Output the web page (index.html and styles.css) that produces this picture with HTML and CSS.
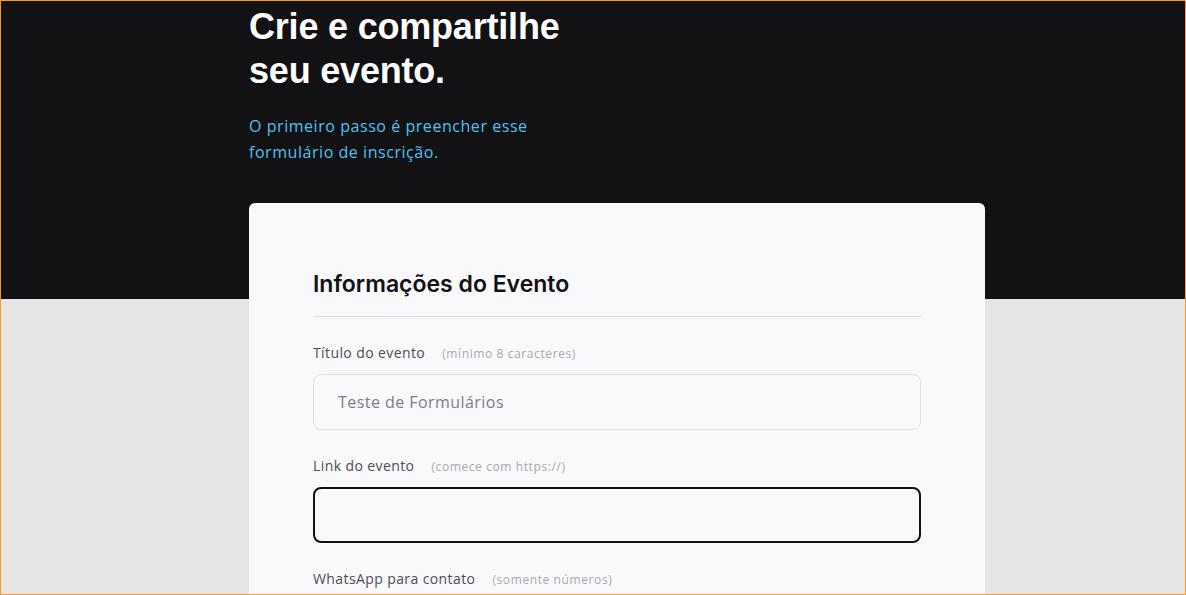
FILE: index.html
```html
<!DOCTYPE html>
<html lang="pt-BR">
<head>
<meta charset="utf-8">
<title>Crie e compartilhe seu evento</title>
<link rel="stylesheet" href="styles.css">
</head>
<body>
<div class="frame">
  <div class="container">
    <header class="hero">
      <h1 class="hero-title">Crie e compartilhe seu evento.</h1>
      <p class="hero-sub">O primeiro passo é preencher esse formulário de inscrição.</p>
    </header>
    <form class="card">
      <h2 class="card-title">Informações do Evento</h2>
      <div class="field">
        <label class="label">Título do evento <span class="hint">(mínimo 8 caracteres)</span></label>
        <div class="input">Teste de Formulários</div>
      </div>
      <div class="field">
        <label class="label">Link do evento <span class="hint">(comece com https://)</span></label>
        <div class="input input-focus"></div>
      </div>
      <div class="field">
        <label class="label">WhatsApp para contato <span class="hint">(somente números)</span></label>
        <div class="input"></div>
      </div>
    </form>
  </div>
</div>
</body>
</html>
```

FILE: styles.css
```css
* { box-sizing: border-box; }
html, body { margin: 0; padding: 0; }
body { font-family: "Open Sans", "Noto Sans", sans-serif; }
.frame {
  width: 1186px;
  height: 595px;
  overflow: hidden;
  border: 1px solid #f39a2b;
  background: linear-gradient(to bottom, #121214 0, #121214 298px, #e5e5e5 298px, #e5e5e5 100%);
}
.container {
  width: 736px;
  margin-left: 248px;
}
.hero { padding-top: 4px; }
.hero-title {
  margin: 0;
  width: 340px;
  font-family: "Liberation Sans", Arial, sans-serif;
  font-weight: 700;
  font-size: 36px;
  line-height: 44px;
  letter-spacing: -0.2px;
  color: #ffffff;
}
.hero-sub {
  margin: 20px 0 0;
  width: 300px;
  font-size: 16px;
  line-height: 26px;
  letter-spacing: 0.55px;
  color: #4ec3f0;
}
.card {
  margin-top: 38px;
  background: #f9f9fb;
  border-radius: 6px;
  padding: 64px 64px 40px;
}
.card-title {
  margin: 0 0 26px;
  font-family: "Inter", sans-serif;
  font-weight: 600;
  font-size: 23px;
  line-height: 34px;
  color: #121214;
  padding-bottom: 15px;
  border-bottom: 1px solid #e1e1e6;
}
.field { display: flex; flex-direction: column; gap: 10px; margin-bottom: 26px; }
.label {
  font-size: 14px;
  line-height: 20px;
  letter-spacing: 0.4px;
  color: #4d4d57;
}
.hint {
  margin-left: 13px;
  font-size: 12px;
  letter-spacing: 0.6px;
  color: #a8a8b3;
}
.input {
  height: 56px;
  border: 1px solid #e1e1e6;
  border-radius: 8px;
  padding: 0 24px;
  display: flex;
  align-items: center;
  font-size: 16px;
  letter-spacing: 0.45px;
  color: #7c7c8a;
}
.input-focus { border: 2px solid #121214; }
```
